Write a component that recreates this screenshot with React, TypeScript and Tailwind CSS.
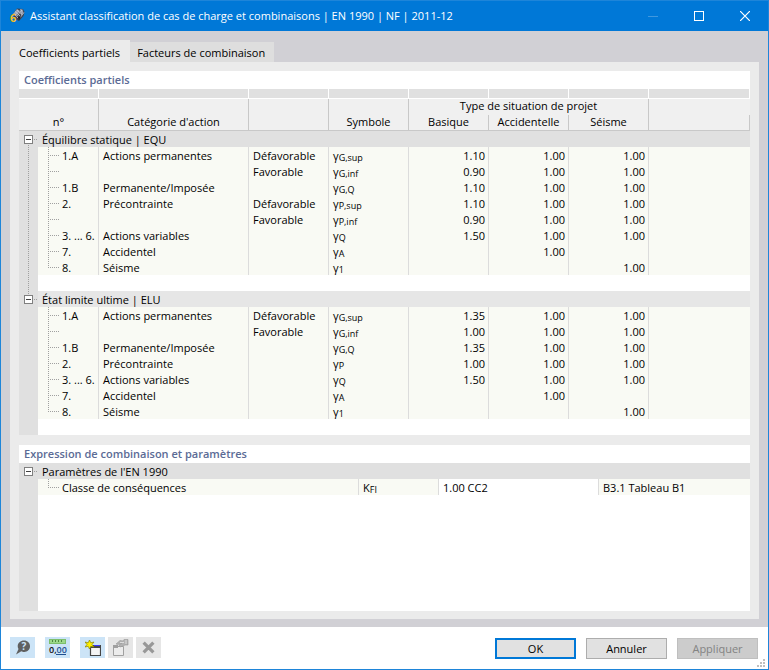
import { useState } from "react";
import type { ReactNode } from "react";

interface FactorRow {
  no: string;
  category: string;
  effect: string;
  sub: string;
  values: [string, string, string];
}

interface FactorGroup {
  title: string;
  rows: FactorRow[];
}

const GROUPS: FactorGroup[] = [
  {
    title: "Équilibre statique | EQU",
    rows: [
      { no: "1.A", category: "Actions permanentes", effect: "Défavorable", sub: "G,sup", values: ["1.10", "1.00", "1.00"] },
      { no: "", category: "", effect: "Favorable", sub: "G,inf", values: ["0.90", "1.00", "1.00"] },
      { no: "1.B", category: "Permanente/Imposée", effect: "", sub: "G,Q", values: ["1.10", "1.00", "1.00"] },
      { no: "2.", category: "Précontrainte", effect: "Défavorable", sub: "P,sup", values: ["1.10", "1.00", "1.00"] },
      { no: "", category: "", effect: "Favorable", sub: "P,inf", values: ["0.90", "1.00", "1.00"] },
      { no: "3. ... 6.", category: "Actions variables", effect: "", sub: "Q", values: ["1.50", "1.00", "1.00"] },
      { no: "7.", category: "Accidentel", effect: "", sub: "A", values: ["", "1.00", ""] },
      { no: "8.", category: "Séisme", effect: "", sub: "1", values: ["", "", "1.00"] },
    ],
  },
  {
    title: "État limite ultime | ELU",
    rows: [
      { no: "1.A", category: "Actions permanentes", effect: "Défavorable", sub: "G,sup", values: ["1.35", "1.00", "1.00"] },
      { no: "", category: "", effect: "Favorable", sub: "G,inf", values: ["1.00", "1.00", "1.00"] },
      { no: "1.B", category: "Permanente/Imposée", effect: "", sub: "G,Q", values: ["1.35", "1.00", "1.00"] },
      { no: "2.", category: "Précontrainte", effect: "", sub: "P", values: ["1.00", "1.00", "1.00"] },
      { no: "3. ... 6.", category: "Actions variables", effect: "", sub: "Q", values: ["1.50", "1.00", "1.00"] },
      { no: "7.", category: "Accidentel", effect: "", sub: "A", values: ["", "1.00", ""] },
      { no: "8.", category: "Séisme", effect: "", sub: "1", values: ["", "", "1.00"] },
    ],
  },
];

const TABS = ["Coefficients partiels", "Facteurs de combinaison"];

/* Left margin of a tree row, with the dotted line between two groups */
function Gutter({ line }: { line?: boolean }) {
  return (
    <svg className="h-4 w-[19px] shrink-0 bg-[#e0e0e0]" viewBox="0 0 19 16" shapeRendering="crispEdges">
      {line && <path d="M9.5 0V16" stroke="#a0a0a0" strokeDasharray="1 1" />}
    </svg>
  );
}

function Branch({ last }: { last: boolean }) {
  return (
    <svg className="h-4 w-6 shrink-0" viewBox="0 0 24 16" fill="none" stroke="#a0a0a0" shapeRendering="crispEdges">
      <path d={last ? "M10.5 0V9" : "M10.5 0V16"} strokeDasharray="1 1" />
      <path d="M12 8.5H21" strokeDasharray="1 1" />
    </svg>
  );
}

interface GroupLabelProps {
  title: string;
  open: boolean;
  onToggle: () => void;
  lineAbove?: boolean;
  lineBelow?: boolean;
}

function GroupLabel({ title, open, onToggle, lineAbove, lineBelow }: GroupLabelProps) {
  return (
    <div className="flex h-4">
      <button
        type="button"
        aria-expanded={open}
        aria-label={title}
        onClick={onToggle}
        className="h-4 w-[19px] shrink-0 bg-[#e0e0e0]"
      >
        <svg className="h-4 w-[19px]" viewBox="0 0 19 16" fill="none" shapeRendering="crispEdges">
          {lineAbove && <path d="M9.5 0V4" stroke="#a0a0a0" strokeDasharray="1 1" />}
          {lineBelow && <path d="M9.5 14V16" stroke="#a0a0a0" strokeDasharray="1 1" />}
          <rect x="5.5" y="4.5" width="8" height="8" fill="#fff" stroke="#7f7f7f" />
          <path d={open ? "M7 8.5H12" : "M7 8.5H12M9.5 6V11"} stroke="#404040" />
          <path d="M15 8.5H19" stroke="#a0a0a0" strokeDasharray="1 1" />
        </svg>
      </button>
      <span className="pt-px pl-1 leading-[15px]">{title}</span>
    </div>
  );
}

function SectionTitle({ children }: { children: ReactNode }) {
  return <h2 className="h-[18px] bg-white px-[5px] font-semibold leading-[18px] text-[#5b6b95]">{children}</h2>;
}

function FactorTable() {
  const [closed, setClosed] = useState<string[]>([]);

  const toggle = (title: string) =>
    setClosed(closed.includes(title) ? closed.filter((t) => t !== title) : [...closed, title]);

  const cell = "border-r border-[#dcdcdc] p-0 px-1 pt-px leading-[15px]";
  const head = "border-r border-b border-[#c8c8c8] p-0 pb-px font-normal leading-[14px]";

  return (
    <table className="w-full table-fixed border-separate border-spacing-0 bg-white">
      <colgroup>
        <col className="w-20" />
        <col className="w-[150px]" />
        <col className="w-20" />
        <col className="w-20" />
        <col className="w-20" />
        <col className="w-20" />
        <col className="w-20" />
        <col />
      </colgroup>
      <thead className="bg-[#f0f0f0]">
        <tr className="h-[10px]">
          {[0, 1, 2, 3, 4, 5, 6, 7].map((i) => (
            <td key={i} className="h-[10px] border-r border-b border-white bg-[#e0e0e0] p-0" />
          ))}
        </tr>
        <tr className="h-4">
          <th rowSpan={2} className={`${head} align-bottom`}>n°</th>
          <th rowSpan={2} className={`${head} align-bottom`}>Catégorie d'action</th>
          <th rowSpan={2} className={head} />
          <th rowSpan={2} className={`${head} align-bottom`}>Symbole</th>
          <th colSpan={3} className="h-4 border-r border-[#c8c8c8] p-0 pb-[2px] font-normal leading-[14px]">
            Type de situation de projet
          </th>
          <th className="p-0" />
        </tr>
        <tr className="h-4">
          <th className={head}>Basique</th>
          <th className={head}>Accidentelle</th>
          <th className={head}>Séisme</th>
          <th className={head} />
        </tr>
      </thead>
      {GROUPS.map((group, g) => {
        const open = !closed.includes(group.title);
        const more = g < GROUPS.length - 1;
        return (
          <tbody key={group.title}>
            <tr className={g === 0 ? "bg-[#e0e0e0]" : "bg-[#e6e6e6]"}>
              <td colSpan={8} className="p-0">
                <GroupLabel
                  title={group.title}
                  open={open}
                  onToggle={() => toggle(group.title)}
                  lineAbove={g > 0}
                  lineBelow={more}
                />
              </td>
            </tr>
            {open &&
              group.rows.map((row, i) => (
                <tr key={i} className="h-4 bg-[#f9faf4]">
                  <td className="border-r border-[#dcdcdc] p-0">
                    <div className="flex h-4 whitespace-nowrap">
                      <Gutter line={more} />
                      <Branch last={i === group.rows.length - 1} />
                      <span className="pt-px leading-[15px]">{row.no}</span>
                    </div>
                  </td>
                  <td className={cell}>{row.category}</td>
                  <td className={cell}>{row.effect}</td>
                  <td className="border-r border-[#dcdcdc] p-0 px-1">
                    <div className="flex h-4 items-end">
                      <span className="leading-[14px]">γ</span>
                      <span className="text-[9px] leading-[11px]">{row.sub}</span>
                    </div>
                  </td>
                  {row.values.map((value, v) => (
                    <td key={v} className="border-r border-[#dcdcdc] p-0 pt-px pr-[3px] text-right leading-[15px]">
                      {value}
                    </td>
                  ))}
                  <td className="p-0" />
                </tr>
              ))}
            <tr>
              <td colSpan={8} className="p-0">
                <div className="flex h-4">
                  <Gutter line={more} />
                </div>
              </td>
            </tr>
          </tbody>
        );
      })}
    </table>
  );
}

function ParameterTable() {
  const [open, setOpen] = useState(true);

  return (
    <table className="w-full table-fixed border-separate border-spacing-0">
      <colgroup>
        <col className="w-[340px]" />
        <col className="w-20" />
        <col className="w-40" />
        <col />
      </colgroup>
      <tbody>
        <tr className="bg-[#e0e0e0]">
          <td colSpan={4} className="p-0">
            <GroupLabel title="Paramètres de l'EN 1990" open={open} onToggle={() => setOpen(!open)} />
          </td>
        </tr>
        {open && (
          <tr className="h-4 bg-[#f9faf4]">
            <td className="border-r border-[#dcdcdc] p-0">
              <div className="flex h-4">
                <Gutter />
                <Branch last />
                <span className="pt-px leading-[15px]">Classe de conséquences</span>
              </div>
            </td>
            <td className="border-r border-[#dcdcdc] p-0 px-1">
              <div className="flex h-4 items-end">
                <span className="leading-[15px]">K</span>
                <span className="text-[9px] leading-[11px]">FI</span>
              </div>
            </td>
            <td className="border-r border-[#dcdcdc] bg-white p-0 px-1 pt-px leading-[15px]">1.00 CC2</td>
            <td className="p-0 px-1 pt-px leading-[15px]">B3.1 Tableau B1</td>
          </tr>
        )}
      </tbody>
    </table>
  );
}

function AppIcon() {
  return (
    <svg className="h-4 w-4 overflow-visible" viewBox="0 0 16 16">
      <path d="M4 6L8 .5L14 1L15.5 4L14.5 8L10 13L6 11Z" fill="#3e4452" />
      <path d="M4 6L8 1L11 3L7 8ZM11 1L13.5 1.5L14.5 5L12 7Z" fill="#9aa3b5" />
      <path d="M6 3.5L11 8M8 2L13 6.5M5 5.5L9 10M13 2L8 8M15 4.5L10 11" stroke="#d4dae6" strokeWidth=".7" />
      <path d="M9 9L12 8.5L10 12.5Z" fill="#1c2230" />
      <text x="1" y="14" fontSize="11" fontWeight="700" fill="#f4bd28">6</text>
    </svg>
  );
}

function TitleBar() {
  return (
    <header className="flex h-[30px] items-center bg-[#0078d7] pl-2 text-white">
      <AppIcon />
      <h1 className="flex-1 pl-[5px]">
        Assistant classification de cas de charge et combinaisons | EN 1990 | NF | 2011-12
      </h1>
      <button type="button" aria-label="Réduire" disabled className="flex h-full w-[46px] items-center justify-center">
        <svg className="h-[10px] w-[10px]" viewBox="0 0 10 10" shapeRendering="crispEdges">
          <path d="M0 5.5H10" stroke="#3f98df" />
        </svg>
      </button>
      <button type="button" aria-label="Agrandir" className="flex h-full w-[46px] items-center justify-center">
        <svg className="h-[10px] w-[10px]" viewBox="0 0 10 10" shapeRendering="crispEdges">
          <rect x=".5" y=".5" width="9" height="9" fill="none" stroke="#fff" />
        </svg>
      </button>
      <button type="button" aria-label="Fermer" className="flex h-full w-[46px] items-center justify-center">
        <svg className="h-[10px] w-[10px]" viewBox="0 0 10 10">
          <path d="M0 0L10 10M10 0L0 10" stroke="#fff" strokeWidth="1.2" />
        </svg>
      </button>
    </header>
  );
}

function ToolButton({ label, disabled, children }: { label: string; disabled?: boolean; children: ReactNode }) {
  return (
    <button
      type="button"
      aria-label={label}
      disabled={disabled}
      className="flex h-[21px] w-[25px] items-center justify-center bg-[#cce4f7] disabled:bg-[#e6e6e6]"
    >
      {children}
    </button>
  );
}

function Footer() {
  return (
    <footer className="relative flex items-start justify-between bg-white pt-[10px] pr-[10px] pb-[10px] pl-[9px]">
      <div className="flex">
        <ToolButton label="Aide">
          <svg className="h-4 w-4" viewBox="0 0 16 16">
            <path d="M9 .5C12.6 .5 15 3 15 6.3C15 9.6 12.5 12 9.3 12C8 12 7.2 11.8 6.3 11.3L1 14.5L3.5 9C3 8.3 2.7 7.500 2.7 6.3C2.7 3 5.4 .5 9 .5Z" fill="#606060" />
            <text x="9" y="10" textAnchor="middle" fontSize="10" fontWeight="700" fill="#cce4f7">?</text>
          </svg>
        </ToolButton>
        <div className="flex gap-[10px] pl-[10px]">
          <ToolButton label="Unités et décimales">
            <svg className="h-[17px] w-[17px] overflow-visible" viewBox="0 0 17 17">
              <g shapeRendering="crispEdges">
                <rect x=".5" y=".5" width="16" height="4" fill="#9bd88a" stroke="#7cbf6c" />
                <path d="M3.5 1V3M6.5 1V3M9.5 1V3M12.5 1V3" stroke="#4d8a42" />
                <path d="M7 15.5H17" stroke="#1e4f91" />
              </g>
              <text x="0" y="14" fontSize="9" fontWeight="600" fill="#101010">
                0,<tspan fill="#1e4f91">00</tspan>
              </text>
            </svg>
          </ToolButton>
          <div className="flex gap-[3px]">
            <ToolButton label="Nouveau">
              <svg className="h-4 w-4" viewBox="0 0 16 16">
                <path d="M5.5 6.5H15.5V15.5H5.5Z" fill="#f4f4f4" stroke="#454545" strokeWidth="1.2" />
                <rect x="6" y="5" width="10" height="3" fill="#454545" />
                <rect x="9" y="5" width="6" height="1" fill="#3838ff" />
                <path d="M4.5 0L5.8 2.8L9 2L7 4.5L9 7L5.8 6.3L4.5 9L3.2 6.3L0 7L2 4.5L0 2L3.2 2.8Z" fill="#fff200" stroke="#8a8400" strokeWidth=".7" />
              </svg>
            </ToolButton>
            <ToolButton label="Modifier" disabled>
              <svg className="h-[17px] w-[17px]" viewBox="0 0 17 17">
                <path d="M1.5 7.5H11.5V16.5H1.5Z" fill="#ececec" stroke="#a0a0a0" />
                <path d="M1 6H6V9H1Z" fill="#a0a0a0" />
                <path d="M4 5L8 1.5L11 2L12 .5H16V6H13L11 7L8 8L7 6L10 4L6 5.5Z" fill="#b2b2b2" stroke="#989898" strokeWidth=".6" />
                <path d="M8 3.5H12M14 1V5" stroke="#dcdcdc" />
              </svg>
            </ToolButton>
            <ToolButton label="Supprimer" disabled>
              <svg className="h-[13px] w-[13px]" viewBox="0 0 12 12">
                <path d="M1.5 1.5L10.5 10.5M10.5 1.5L1.5 10.5" stroke="#989898" strokeWidth="3" />
              </svg>
            </ToolButton>
          </div>
        </div>
      </div>
      <div className="flex gap-[10px] pt-px">
        <button type="button" className="h-[21px] w-[81px] border-2 border-[#0078d7] bg-[#e1e1e1]">OK</button>
        <button type="button" className="h-[21px] w-[81px] border border-[#adadad] bg-[#e1e1e1]">Annuler</button>
        <button type="button" disabled className="h-[21px] w-[81px] border border-[#bfbfbf] bg-[#cccccc] text-[#838383]">
          Appliquer
        </button>
      </div>
      <svg className="absolute right-[3px] bottom-[2px] h-2 w-2" viewBox="0 0 8 8" fill="#bfbfbf" shapeRendering="crispEdges">
        <path d="M6 0h2v2h-2zM3 3h2v2h-2zM6 3h2v2h-2zM0 6h2v2h-2zM3 6h2v2h-2zM6 6h2v2h-2z" />
      </svg>
    </footer>
  );
}

export default function App() {
  const [tab, setTab] = useState(0);

  return (
    <div className="flex min-h-screen flex-col border border-[#1e85d9] font-['Open_Sans','Noto_Sans',sans-serif] text-[11px] leading-4 text-black">
      <TitleBar />
      <main className="flex flex-1 flex-col bg-[#d1d0d5] px-[9px] pt-[9px] pb-2">
        <div role="tablist" className="flex items-end">
          {TABS.map((label, i) => (
            <button
              key={label}
              type="button"
              role="tab"
              aria-selected={tab === i}
              onClick={() => setTab(i)}
              className={
                tab === i
                  ? "h-[22px] bg-[#ebebeb] pt-[3px] pr-[10px] pl-[9px]"
                  : "h-5 bg-[#dedede] pt-px pr-[9px] pl-[7px]"
              }
            >
              {label}
            </button>
          ))}
        </div>
        <div className="flex flex-1 flex-col gap-[10px] bg-[#ebebeb] px-[9px] pt-[9px] pb-2">
          <section>
            <SectionTitle>Coefficients partiels</SectionTitle>
            <FactorTable />
          </section>
          <section className="flex flex-1 flex-col bg-white">
            <SectionTitle>Expression de combinaison et paramètres</SectionTitle>
            <ParameterTable />
            <div className="w-[19px] flex-1 bg-[#e0e0e0]" />
          </section>
        </div>
      </main>
      <Footer />
    </div>
  );
}
